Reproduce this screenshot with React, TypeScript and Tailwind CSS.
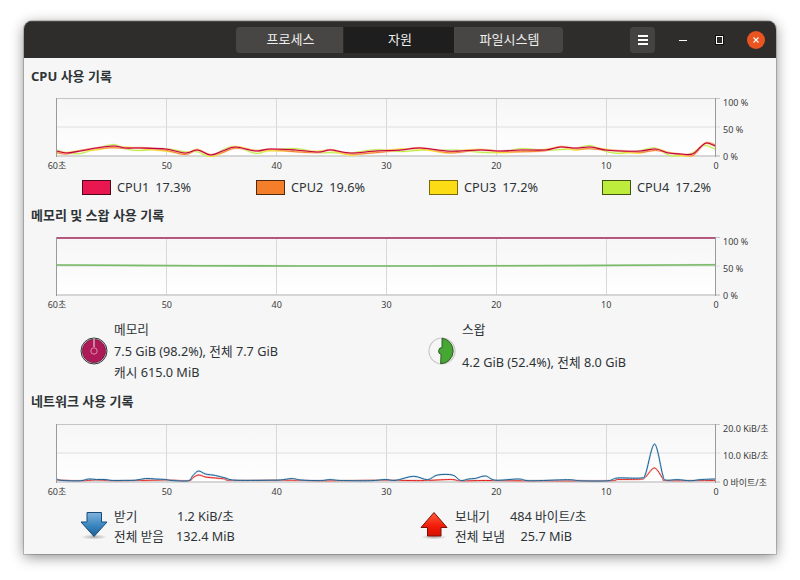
import React from "react";

type P = [number, number];

function smooth(pts: P[]): string {
  let d = `M${pts[0][0]} ${pts[0][1]}`;
  for (let i = 0; i < pts.length - 1; i++) {
    const p0 = pts[Math.max(0, i - 1)];
    const p1 = pts[i];
    const p2 = pts[i + 1];
    const p3 = pts[Math.min(pts.length - 1, i + 2)];
    const c1x = p1[0] + (p2[0] - p0[0]) / 6;
    const c1y = p1[1] + (p2[1] - p0[1]) / 6;
    const c2x = p2[0] - (p3[0] - p1[0]) / 6;
    const c2y = p2[1] - (p3[1] - p1[1]) / 6;
    d += ` C${c1x.toFixed(1)} ${c1y.toFixed(1)} ${c2x.toFixed(1)} ${c2y.toFixed(1)} ${p2[0]} ${p2[1]}`;
  }
  return d;
}

// page x / page y, shifted to the chart's own origin
const cpuBase: P[] = [
  [56, 151], [66, 153], [80, 151], [95, 148], [113, 146], [125, 148], [140, 148], [165, 149], [185, 153], [197, 150],
  [210, 155], [222, 151], [235, 147], [255, 151], [270, 149], [295, 150], [318, 152], [330, 150], [350, 153], [375, 151],
  [400, 150], [420, 148], [446, 151], [460, 151], [480, 150], [500, 151], [520, 150], [545, 150], [560, 147], [575, 148],
  [590, 147], [605, 150], [620, 151], [640, 151], [655, 149], [668, 153], [680, 154], [692, 154], [700, 147], [706, 143],
  [715, 146],
];

const cpuSeries = [
  { color: "#c4003a", halo: "#f0a0b8", amp: 0, phase: 0 },
  { color: "#f57e2b", halo: "#f9c39a", amp: 1.2, phase: 1.1 },
  { color: "#f5d80f", halo: "#f9ec90", amp: 1.5, phase: 2.3 },
  { color: "#bdec3c", halo: "#dff5a0", amp: 2, phase: 4.2 },
];

const memLine: P[] = [[56, 238], [300, 238], [715, 238]];
const swapLine: P[] = [[56, 265], [300, 266], [500, 265.8], [715, 264.7]];

const netBlueH: P[] = [
  [56, 2], [62, 0.5], [80, 0.3], [88, 2], [96, 1.5], [105, 1.5], [112, 0.5], [125, 0.6], [135, 0.8], [145, 2.5], [155, 2],
  [165, 1.5], [172, 0.4], [188, 0.3], [192, 5], [198, 10], [205, 7], [215, 5.5], [225, 3], [232, 1], [250, 0.6], [270, 0.8],
  [280, 1], [292, 2.5], [300, 1], [320, 0.4], [330, 1.5], [340, 0.5], [370, 0.3], [385, 1.5], [395, 0.6], [413, 4.7],
  [427, 1.3], [437, 6], [452, 6], [460, 0.5], [468, 2], [475, 2.6], [485, 5], [495, 0.8], [518, 2], [530, 0.2], [567, 1.3],
  [580, 0.2], [607, 0.2], [617, 3], [640, 3], [645, 7], [654, 37], [662, 7], [665, 1], [677, 1.4], [690, 0.2], [700, 1.4], [715, 2],
];
const netRedH: P[] = [
  [56, 1], [80, 0.2], [95, 1], [112, 0.3], [140, 0.6], [165, 1], [188, 0.3], [192, 3], [198, 6], [205, 4], [215, 3], [225, 2],
  [232, 0.6], [292, 0.8], [320, 0.2], [385, 0.8], [420, 0.4], [450, 1.5], [460, 0.2], [485, 0.5], [530, 0.2], [607, 0.2],
  [617, 1.5], [640, 1.8], [645, 4], [654, 13], [662, 3], [665, 0.5], [690, 0.4], [715, 0.6],
];

function toChart(pts: P[], top: number): P[] {
  return pts.map(([x, y]) => [x - 55.5, +(y - top).toFixed(1)] as P);
}

function ChartFrame({ children }: { children?: React.ReactNode }) {
  return (
    <svg width="664" height="59" viewBox="0 0 664 59" className="block shrink-0">
      <defs>
        <linearGradient id="chartbg" x1="0" y1="0" x2="0" y2="1">
          <stop offset="0" stopColor="#f6f6f6" />
          <stop offset="1" stopColor="#ffffff" />
        </linearGradient>
      </defs>
      <rect x="0.5" y="0.5" width="659" height="58" fill="url(#chartbg)" />
      {[110.5, 220.5, 330.5, 440.5, 550.5].map((x) => (
        <line key={x} x1={x} y1="1" x2={x} y2="58" stroke="#d8d8d8" strokeWidth="1" />
      ))}
      <line x1="0.5" y1="29" x2="664" y2="29" stroke="#dedede" strokeWidth="1" />
      <line x1="0" y1="0.5" x2="664" y2="0.5" stroke="#c4c4c4" strokeWidth="1" />
      <line x1="0" y1="58" x2="664" y2="58" stroke="#c8c8c8" strokeWidth="1.5" />
      {children}
      <line x1="0.5" y1="0" x2="0.5" y2="59" stroke="#9a9a9a" strokeWidth="1" />
      <line x1="659.5" y1="0" x2="659.5" y2="59" stroke="#9a9a9a" strokeWidth="1" />
    </svg>
  );
}

function Line({ d, color, halo, w = 1 }: { d: string; color: string; halo: string; w?: number }) {
  return (
    <g fill="none" strokeLinejoin="round">
      <path d={d} stroke={halo} strokeWidth="2" opacity="0.55" />
      <path d={d} stroke={color} strokeWidth={w} />
    </g>
  );
}

function CpuLines() {
  return (
    <>
      {[...cpuSeries].reverse().map((s) => {
        const pts = cpuBase.map(([x, y], i): P => {
          const dy = s.amp * Math.sin(i * 1.7 + s.phase) + (s.amp ? 0.6 : 0);
          const yy = i === cpuBase.length - 1 && s.amp ? y + s.amp * 1.6 - 4 + s.phase : y + dy;
          return [x, yy];
        });
        return <Line key={s.color} d={smooth(toChart(pts, 98))} color={s.color} halo={s.halo} w={s.amp ? 1 : 1.1} />;
      })}
    </>
  );
}

function MemLines() {
  return (
    <>
      <Line d={smooth(toChart(swapLine, 237))} color="#7dbb6c" halo="#a8d69c" w={1.6} />
      <Line d={smooth(toChart(memLine, 237))} color="#a83a68" halo="#d58aa8" w={1.6} />
    </>
  );
}

function NetLines() {
  const conv = (p: P[]) => smooth(toChart(p.map(([x, h]): P => [x, 481 - h]), 424));
  return (
    <>
      <Line d={conv(netRedH)} color="#e0201a" halo="#f4a8a0" />
      <Line d={conv(netBlueH)} color="#1c5f90" halo="#a6cde4" />
    </>
  );
}

function Chart({ children, yLabels }: { children: React.ReactNode; yLabels: string[] }) {
  return (
    <>
      <div className="flex pl-[32px]">
        <ChartFrame>{children}</ChartFrame>
        <div className="-mb-[6px] -mt-[1px] ml-[3px] flex h-[66px] flex-col justify-between whitespace-nowrap text-[9px] leading-[12px] text-[#3c3c3c]">
          {yLabels.map((l) => (
            <span key={l}>{l}</span>
          ))}
        </div>
      </div>
      <div className="ml-[13px] mt-[3px] flex w-[699px] justify-between text-[9px] leading-[12px] text-[#3c3c3c]">
        {["60초", "50", "40", "30", "20", "10", "0"].map((l) => (
          <span key={l} className="w-[40px] text-center">
            {l}
          </span>
        ))}
      </div>
    </>
  );
}

function Title({ children, className }: { children: React.ReactNode; className: string }) {
  return <h2 className={`pl-[7px] text-[13px] font-bold leading-[18px] text-[#2e3436] ${className}`}>{children}</h2>;
}

function Legend({ color, border, label, value, className }: { color: string; border: string; label: string; value: string; className: string }) {
  return (
    <div className={`flex items-center ${className}`}>
      <span className={`h-[15px] w-[29px] border ${color} ${border}`} />
      <span className="ml-[6px] text-[12.7px] leading-[16px] text-[#2e3436]">{label}</span>
      <span className="ml-[6px] text-[12.7px] leading-[16px] text-[#2e3436]">{value}</span>
    </div>
  );
}

function MemPie() {
  return (
    <svg width="28" height="28" viewBox="0 0 28 28" className="shrink-0">
      <circle cx="14" cy="14" r="13" fill="#e8e8e8" stroke="#333" strokeWidth="1" />
      <circle cx="14" cy="14" r="11.7" fill="#ae1a58" stroke="#4a1028" strokeWidth="0.6" />
      <path d="M14 1.5V10" stroke="#d8d0d4" strokeWidth="1.2" />
      <circle cx="14" cy="14" r="3.2" fill="none" stroke="#e08aa8" strokeWidth="1" />
    </svg>
  );
}

function SwapPie() {
  return (
    <svg width="28" height="28" viewBox="0 0 28 28" className="shrink-0">
      <circle cx="14" cy="14" r="13" fill="#f6f6f6" stroke="#c8c8c8" strokeWidth="1.2" />
      <path
        d="M14 1.2 A12.8 12.8 0 0 1 12.6 26.7 L13 17.5 A3.6 3.6 0 0 1 14 10.5 Z"
        fill="#46a832"
        stroke="#1e3d18"
        strokeWidth="0.8"
        strokeLinejoin="round"
      />
    </svg>
  );
}

function DownArrow() {
  return (
    <svg width="30" height="30" viewBox="0 0 30 30" className="shrink-0">
      <defs>
        <linearGradient id="blueArrow" x1="0" y1="0" x2="0" y2="1">
          <stop offset="0" stopColor="#7fb3dc" />
          <stop offset="0.55" stopColor="#3a85bf" />
          <stop offset="1" stopColor="#1f5f94" />
        </linearGradient>
        <radialGradient id="shadowD">
          <stop offset="0" stopColor="#000" stopOpacity="0.3" />
          <stop offset="1" stopColor="#000" stopOpacity="0" />
        </radialGradient>
      </defs>
      <ellipse cx="15" cy="26" rx="13" ry="2.6" fill="url(#shadowD)" />
      <path d="M8 1.5H22.5V11H28L15 25.5L2 11H8Z" fill="url(#blueArrow)" stroke="#1a4a78" strokeWidth="1" strokeLinejoin="round" />
    </svg>
  );
}

function UpArrow() {
  return (
    <svg width="30" height="30" viewBox="0 0 30 30" className="shrink-0">
      <defs>
        <linearGradient id="redArrow" x1="0" y1="0" x2="0" y2="1">
          <stop offset="0" stopColor="#ff5c3c" />
          <stop offset="0.6" stopColor="#f01a08" />
          <stop offset="1" stopColor="#d81200" />
        </linearGradient>
        <radialGradient id="shadowU">
          <stop offset="0" stopColor="#000" stopOpacity="0.3" />
          <stop offset="1" stopColor="#000" stopOpacity="0" />
        </radialGradient>
      </defs>
      <ellipse cx="15" cy="26" rx="13" ry="2.4" fill="url(#shadowU)" />
      <path d="M15 1.5L28 16.5H22V25H8.5V16.5H2Z" fill="url(#redArrow)" stroke="#7a1005" strokeWidth="1" strokeLinejoin="round" />
    </svg>
  );
}

export default function App() {
  return (
    <div className="h-[580px] w-[800px] overflow-hidden bg-white pl-[24px] pt-[21px] font-['Noto_Sans','Noto_Sans_CJK_KR',sans-serif]">
      <div className="flex h-[533px] w-[752px] flex-col overflow-hidden rounded-t-[8px] bg-[#f6f6f6] shadow-[0_0_0_1px_rgba(0,0,0,0.18),0_3px_14px_rgba(0,0,0,0.45)]">
        <header className="flex h-[37px] shrink-0 items-center border-t border-[#4a4846] bg-[#2f2d2c] text-[13px] text-[#eeeeec]">
          <div className="ml-[212px] flex h-[26px]">
            <div className="flex w-[108px] items-center justify-center rounded-l-[4px] border-r border-[#2a2928] bg-[#484644] pl-[2px]">프로세스</div>
            <div className="flex w-[110px] items-center justify-center bg-[#1e1e1e] pl-[2px]">자원</div>
            <div className="flex w-[109px] items-center justify-center rounded-r-[4px] bg-[#484644] pl-[2px]">파일시스템</div>
          </div>
          <div className="ml-[67px] flex h-[26px] w-[25px] flex-col items-center justify-center gap-[2px] rounded-[4px] bg-[#454341]">
            <span className="h-[2px] w-[10px] bg-white" />
            <span className="h-[2px] w-[10px] bg-white" />
            <span className="h-[2px] w-[10px] bg-white" />
          </div>
          <span className="ml-[24px] h-[1px] w-[8px] bg-white" />
          <span className="ml-[29px] h-[8px] w-[7px] border border-white bg-[#2f2d2c] outline outline-1 outline-[#111]" />
          <div className="ml-[24px] flex h-[18px] w-[18px] items-center justify-center rounded-full bg-[#e95420]">
            <svg width="8" height="8" viewBox="0 0 8 8">
              <path d="M1.5 1.5L6.5 6.5M6.5 1.5L1.5 6.5" stroke="#fff" strokeWidth="1.1" />
            </svg>
          </div>
        </header>

        <main className="flex flex-1 flex-col">
          <Title className="mt-[9px]">CPU 사용 기록</Title>
          <div className="mt-[13px]">
            <Chart yLabels={["100 %", "50 %", "0 %"]}>
              <CpuLines />
            </Chart>
          </div>
          <div className="mt-[7px] flex h-[16px]">
            <Legend className="ml-[58px] w-[174px]" color="bg-[#e8174f]" border="border-[#4a0a1c]" label="CPU1" value="17.3%" />
            <Legend className="w-[173px]" color="bg-[#f57e2b]" border="border-[#4f2a0e]" label="CPU2" value="19.6%" />
            <Legend className="w-[173px]" color="bg-[#fcdc14]" border="border-[#7a6a10]" label="CPU3" value="17.2%" />
            <Legend className="" color="bg-[#bdec3c]" border="border-[#3f5210]" label="CPU4" value="17.2%" />
          </div>

          <Title className="mt-[11px]">메모리 및 스왑 사용 기록</Title>
          <div className="mt-[13px]">
            <Chart yLabels={["100 %", "50 %", "0 %"]}>
              <MemLines />
            </Chart>
          </div>
          <div className="mt-[8px] flex text-[12.7px] leading-[21.5px] text-[#2e3436]">
            <div className="ml-[56px] flex w-[348px] items-center">
              <MemPie />
              <div className="ml-[6px]">
                <div>메모리</div>
                <div>7.5 GiB (98.2%), 전체 7.7 GiB</div>
                <div>캐시 615.0 MiB</div>
              </div>
            </div>
            <div className="flex items-center">
              <SwapPie />
              <div className="ml-[6px] flex h-[64px] flex-col">
                <div>스왑</div>
                <div className="mt-[11px]">4.2 GiB (52.4%), 전체 8.0 GiB</div>
              </div>
            </div>
          </div>

          <Title className="mt-[8px]">네트워크 사용 기록</Title>
          <div className="mt-[14px]">
            <Chart yLabels={["20.0 KiB/초", "10.0 KiB/초", "0 바이트/초"]}>
              <NetLines />
            </Chart>
          </div>
          <div className="mt-[8px] flex text-[12.7px] leading-[20px] text-[#2e3436]">
            <div className="ml-[55px] flex w-[340px] items-center">
              <DownArrow />
              <div className="ml-[5px] grid grid-cols-[62px_auto]">
                <span>받기</span>
                <span className="text-center">1.2 KiB/초</span>
                <span>전체 받음</span>
                <span className="text-center">132.4 MiB</span>
              </div>
            </div>
            <div className="flex items-center">
              <UpArrow />
              <div className="ml-[6px] grid grid-cols-[55px_auto]">
                <span>보내기</span>
                <span className="text-center">484 바이트/초</span>
                <span>전체 보냄</span>
                <span className="pr-[4px] text-center">25.7 MiB</span>
              </div>
            </div>
          </div>
        </main>
      </div>
    </div>
  );
}
